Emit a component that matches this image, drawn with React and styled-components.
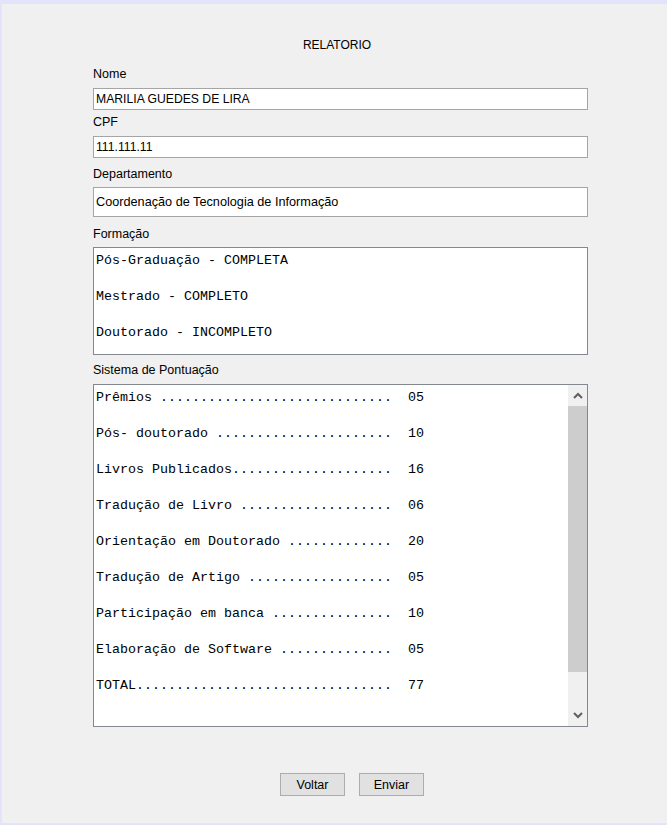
import styled, { createGlobalStyle } from 'styled-components';

const GlobalStyle = createGlobalStyle`
  html, body {
    margin: 0;
    padding: 0;
    background: #f0f0f0;
  }
`;

const formacao = [
  'Pós-Graduação - COMPLETA',
  'Mestrado - COMPLETO',
  'Doutorado - INCOMPLETO',
];

const pontos = [
  ['Prêmios ', '05'],
  ['Pós- doutorado ', '10'],
  ['Livros Publicados', '16'],
  ['Tradução de Livro ', '06'],
  ['Orientação em Doutorado ', '20'],
  ['Tradução de Artigo ', '05'],
  ['Participação em banca ', '10'],
  ['Elaboração de Software ', '05'],
  ['TOTAL', '77'],
];

const linha = (label, value) => label + '.'.repeat(37 - label.length) + '  ' + value;

export default function App() {
  return (
    <>
      <GlobalStyle />
      <Frame>
        <Title>RELATORIO</Title>
        <Column>
          <Label $top={12}>Nome</Label>
          <Field $top={7}>MARILIA GUEDES DE LIRA</Field>
          <Label $top={3}>CPF</Label>
          <Field $top={7}>111.111.11</Field>
          <Label $top={7}>Departamento</Label>
          <Field $top={6} $height={30} $big>
            Coordenação de Tecnologia de Informação
          </Field>
          <Label $top={8}>Formação</Label>
          <TextArea $top={6}>
            {formacao.map((l) => (
              <MonoLine key={l}>{l}</MonoLine>
            ))}
          </TextArea>
          <Label $top={6}>Sistema de Pontuação</Label>
          <ScrollPane>
            <ScrollContent>
              {pontos.map(([l, v]) => (
                <MonoLine key={l}>{linha(l, v)}</MonoLine>
              ))}
            </ScrollContent>
            <ScrollBar>
              <ArrowButton>
                <svg width="10" height="7" viewBox="0 0 10 7">
                  <polyline points="1,6 5,2 9,6" fill="none" stroke="#606060" strokeWidth="2" />
                </svg>
              </ArrowButton>
              <Thumb />
              <Track />
              <ArrowButton>
                <svg width="10" height="7" viewBox="0 0 10 7">
                  <polyline points="1,1 5,5 9,1" fill="none" stroke="#606060" strokeWidth="2" />
                </svg>
              </ArrowButton>
            </ScrollBar>
          </ScrollPane>
          <Buttons>
            <Button>Voltar</Button>
            <Button>Enviar</Button>
          </Buttons>
        </Column>
      </Frame>
    </>
  );
}

const Frame = styled.div`
  box-sizing: border-box;
  width: 667px;
  height: 825px;
  border-top: 4px solid #e3e3fb;
  border-left: 2px solid #e3e3fb;
  border-bottom: 2px solid #e3e3fb;
  background: #f0f0f0;
  font-family: "Liberation Sans", Arial, sans-serif;
  color: #000;
  overflow: hidden;
`;

const Title = styled.div`
  margin-top: 33px;
  padding-left: 5px;
  height: 16px;
  line-height: 17px;
  font-size: 12px;
  text-align: center;
`;

const Column = styled.div`
  display: flex;
  flex-direction: column;
  width: 495px;
  margin-left: 91px;
`;

const Label = styled.div`
  margin-top: ${(p) => p.$top}px;
  height: 16px;
  line-height: 18px;
  font-size: 12.5px;
`;

const Field = styled.div`
  box-sizing: border-box;
  margin-top: ${(p) => p.$top}px;
  height: ${(p) => p.$height || 22}px;
  border: 1px solid #a5a5a5;
  background: #fff;
  padding-left: 2px;
  display: flex;
  align-items: center;
  font-size: ${(p) => (p.$big ? '12.7px' : '12.2px')};
`;

const TextArea = styled.div`
  box-sizing: border-box;
  margin-top: ${(p) => p.$top}px;
  height: 108px;
  border: 1px solid #828790;
  background: #fff;
  padding: 4px 0 0 2px;
`;

const MonoLine = styled.div`
  font-family: "Liberation Mono", "Courier New", monospace;
  font-size: 13.33px;
  line-height: 18px;
  margin-bottom: 18px;
  white-space: pre;
`;

const ScrollPane = styled.div`
  box-sizing: border-box;
  margin-top: 7px;
  height: 343px;
  border: 1px solid #828790;
  background: #fff;
  display: flex;
`;

const ScrollContent = styled.div`
  flex: 1;
  padding: 4px 0 0 2px;
  overflow: hidden;
`;

const ScrollBar = styled.div`
  width: 19px;
  display: flex;
  flex-direction: column;
  background: #f0f0f0;
`;

const ArrowButton = styled.div`
  height: 21px;
  display: flex;
  align-items: center;
  justify-content: center;
`;

const Thumb = styled.div`
  height: 266px;
  background: #cdcdcd;
`;

const Track = styled.div`
  flex: 1;
`;

const Buttons = styled.div`
  display: flex;
  gap: 14px;
  margin-top: 46px;
  margin-left: 187px;
`;

const Button = styled.div`
  box-sizing: border-box;
  width: 65px;
  height: 23px;
  border: 1px solid #adadad;
  background: #e1e1e1;
  display: flex;
  align-items: center;
  justify-content: center;
  font-size: 12.5px;
`;
